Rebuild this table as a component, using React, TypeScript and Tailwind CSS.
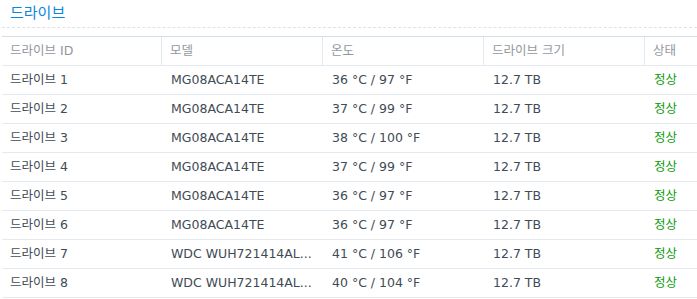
import React from "react";

const rows = [
  ["드라이브 1", "MG08ACA14TE", "36 °C / 97 °F"],
  ["드라이브 2", "MG08ACA14TE", "37 °C / 99 °F"],
  ["드라이브 3", "MG08ACA14TE", "38 °C / 100 °F"],
  ["드라이브 4", "MG08ACA14TE", "37 °C / 99 °F"],
  ["드라이브 5", "MG08ACA14TE", "36 °C / 97 °F"],
  ["드라이브 6", "MG08ACA14TE", "36 °C / 97 °F"],
  ["드라이브 7", "WDC WUH721414AL...", "41 °C / 106 °F"],
  ["드라이브 8", "WDC WUH721414AL...", "40 °C / 104 °F"],
];

const font = { fontFamily: '"DejaVu Sans", "Noto Sans CJK KR", sans-serif' };

export default function App() {
  return (
    <div className="w-[697px] h-[299px] bg-white overflow-hidden pl-[2px]" style={font}>
      <div className="h-[28px] border-b border-dashed border-[#dfe3e8] pl-[8px] pt-[3px] text-[15px] leading-[20px] text-[#0a86e0]">
        드라이브
      </div>
      <div className="mt-[8px] border-t border-[#d3e0ea]">
        <div className="flex h-[29px] border-b border-[#e4e9ef] text-[12.5px] text-[#92979e]">
          <div className="w-[160px] border-r border-[#e4e9ef] pl-[8px] flex items-center">드라이브 ID</div>
          <div className="w-[161px] border-r border-[#e4e9ef] pl-[8px] flex items-center">모델</div>
          <div className="w-[161px] border-r border-[#e4e9ef] pl-[8px] flex items-center">온도</div>
          <div className="w-[161px] border-r border-[#e4e9ef] pl-[8px] flex items-center">드라이브 크기</div>
          <div className="flex-1 pl-[8px] flex items-center">상태</div>
        </div>
        {rows.map((r) => (
          <div key={r[0]} className="flex h-[29px] border-b border-[#e4e9ef] text-[12.5px] text-[#414b55]">
            <div className="w-[161px] pl-[8px] flex items-center">{r[0]}</div>
            <div className="w-[161px] pl-[8px] flex items-center whitespace-nowrap">{r[1]}</div>
            <div className="w-[161px] pl-[8px] flex items-center">{r[2]}</div>
            <div className="w-[161px] pl-[8px] flex items-center">12.7 TB</div>
            <div className="flex-1 pl-[8px] flex items-center text-[#0a9a0a]">정상</div>
          </div>
        ))}
      </div>
    </div>
  );
}
